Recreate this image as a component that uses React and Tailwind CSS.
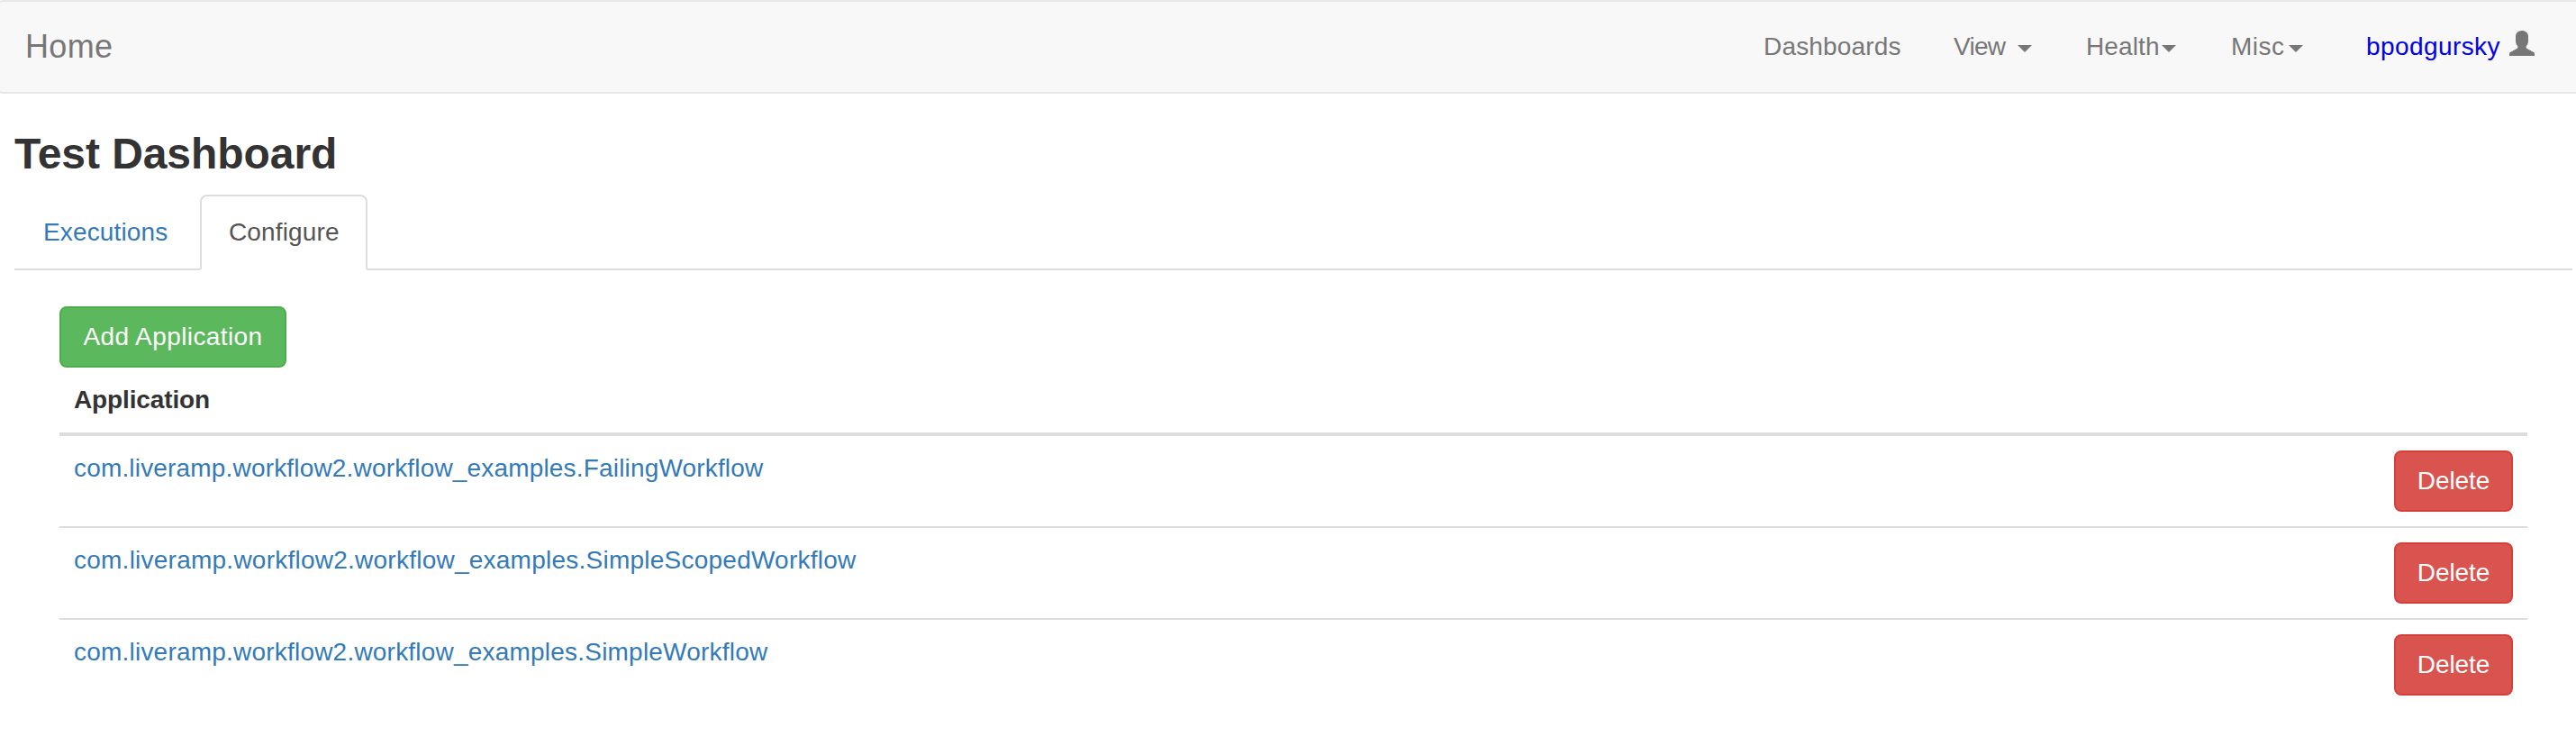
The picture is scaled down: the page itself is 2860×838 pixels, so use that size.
const applications = [
  {
    name: "com.liveramp.workflow2.workflow_examples.FailingWorkflow",
    tracking: "tracking-[0.173px]",
  },
  {
    name: "com.liveramp.workflow2.workflow_examples.SimpleScopedWorkflow",
    tracking: "tracking-[0.241px]",
  },
  {
    name: "com.liveramp.workflow2.workflow_examples.SimpleWorkflow",
    tracking: "tracking-[0.211px]",
  },
];

function Caret() {
  return (
    <span className="mt-[18px] h-0 w-0 shrink-0 border-x-8 border-t-8 border-x-transparent border-t-[#777777]" />
  );
}

function UserIcon() {
  return (
    <svg className="mt-0.5 h-7 w-7 shrink-0" viewBox="0 0 28 28" fill="#777777">
      <path d="M14 0C17.8 0 21 2.3 21 6.3V11.5C21 14.2 20 16 18.7 17.2V18.6C18.7 19.3 19 19.8 19.7 20.1L27 24C27.7 24.4 28 24.8 28 25.5V28H0V25.5C0 24.8 0.3 24.4 1 24L8.3 20.1C9 19.8 9.3 19.3 9.3 18.6V17.2C8 16 7 14.2 7 11.5V6.3C7 2.3 10.2 0 14 0Z" />
    </svg>
  );
}

function Navbar() {
  return (
    <nav className="-ml-1 flex h-[104px] w-[2882px] rounded-lg border-2 border-[#e7e7e7] bg-[#f8f8f8] pt-[30px] leading-10 text-[#777777]">
      <a href="#" className="ml-[30px] text-[36px] tracking-[0.331px]">
        Home
      </a>
      <div className="ml-auto flex w-[918px] shrink-0">
        <a href="#" className="w-[211px] tracking-[0.169px]">
          Dashboards
        </a>
        <a href="#" className="flex w-[147px]">
          <span className="w-[71px] tracking-[-0.7px]">View</span>
          <Caret />
        </a>
        <a href="#" className="flex w-[161px]">
          <span className="w-[84px] tracking-[0.127px]">Health</span>
          <Caret />
        </a>
        <a href="#" className="flex w-[150px]">
          <span className="w-[64px] tracking-[0.485px]">Misc</span>
          <Caret />
        </a>
        <a href="#" className="flex">
          <span className="w-[159px] tracking-[0.416px] text-[#0000ee]">bpodgursky</span>
          <UserIcon />
        </a>
      </div>
    </nav>
  );
}

export default function App() {
  return (
    <div className="h-[838px] w-full overflow-hidden bg-white font-['Liberation_Sans',Arial,sans-serif] text-[28px] leading-10 text-[#333333]">
      <Navbar />
      <main className="pt-10 pr-1 pl-4">
        <h2 className="mb-[18px] text-[48px] leading-[54px] font-bold tracking-[-0.066px]">
          Test Dashboard
        </h2>
        <div className="flex border-b-2 border-[#dddddd]">
          <a
            href="#"
            className="mr-1 -mb-0.5 w-[202px] px-8 py-[22px] tracking-[0.15px] text-[#337ab7]"
          >
            Executions
          </a>
          <a
            href="#"
            className="-mb-0.5 w-[186px] rounded-t-lg border-2 border-[#dddddd] border-b-transparent bg-white px-[30px] py-5 tracking-[0.146px] text-[#555555]"
          >
            Configure
          </a>
        </div>
        <section className="w-[2790px] pt-10 pl-[50px]">
          <button className="block h-[68px] w-[252px] rounded-lg border-2 border-[#4cae4c] bg-[#5cb85c] tracking-[0.4px] text-white">
            Add Application
          </button>
          <div className="border-b-4 border-[#dddddd] p-4 font-bold tracking-[-0.134px]">
            Application
          </div>
          <div className="divide-y-2 divide-[#dddddd]">
            {applications.map((app) => (
              <div key={app.name} className="flex items-start justify-between p-4">
                <a href="#" className={`text-[#337ab7] ${app.tracking}`}>
                  {app.name}
                </a>
                <button className="h-[68px] w-[132px] rounded-lg border-2 border-[#d43f3a] bg-[#d9534f] tracking-[-0.073px] text-white">
                  Delete
                </button>
              </div>
            ))}
          </div>
        </section>
      </main>
    </div>
  );
}
